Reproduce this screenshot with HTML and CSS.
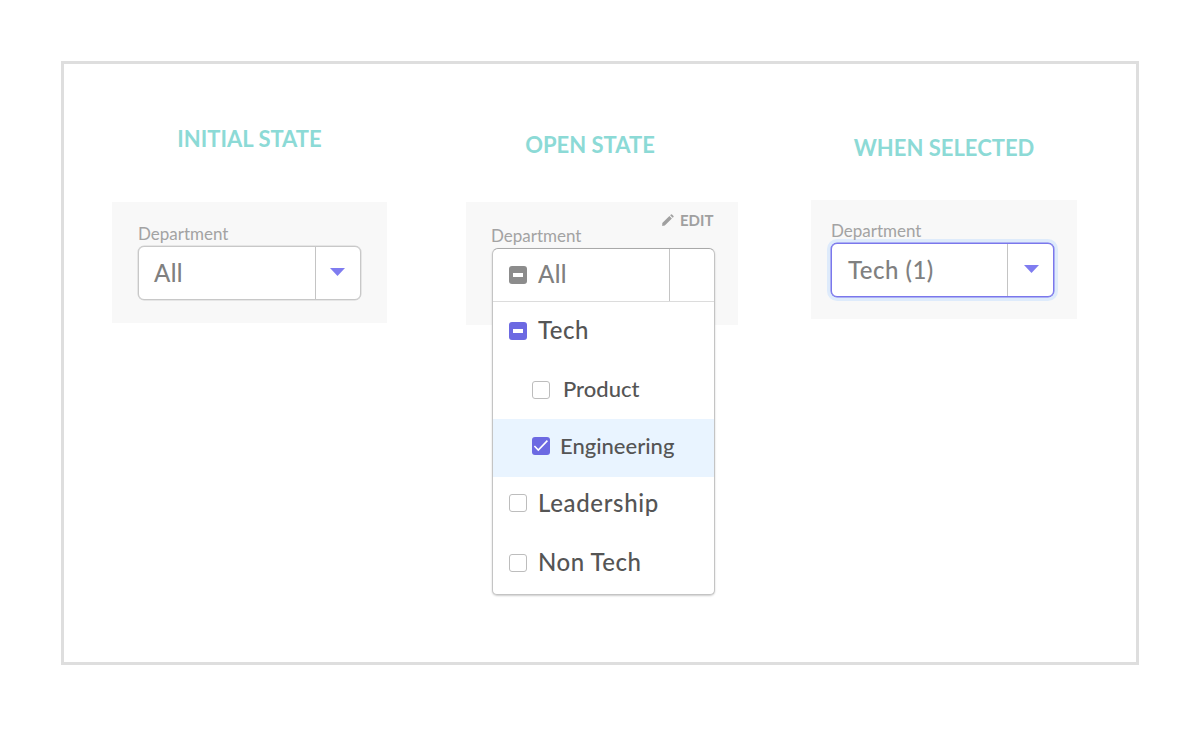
FILE: index.html
```html
<!DOCTYPE html>
<html lang="en">
<head>
<meta charset="utf-8">
<title>Department dropdown states</title>
<link rel="stylesheet" href="styles.css">
</head>
<body>
<main class="frame">
  <section class="state state-initial">
    <h2 class="title">INITIAL STATE</h2>
    <div class="panel">
      <div class="label">Department</div>
      <div class="select">
        <div class="value"><span class="t-all">All</span></div>
        <div class="toggle"><svg class="caret" viewBox="0 0 15 8"><path d="M0 0h15L7.5 8z"/></svg></div>
      </div>
    </div>
  </section>

  <section class="state state-open">
    <h2 class="title">OPEN STATE</h2>
    <div class="panel">
      <div class="edit">
        <svg class="pencil" viewBox="0 0 12 12"><path d="M.3 9.1 7.4 2l2.5 2.5-7.1 7.1-2.6.3zM8.1 1.3l.9-.9q.5-.4 1 0l1.5 1.5q.4.5 0 1l-.9.9z"/></svg>
        <span>EDIT</span>
      </div>
      <div class="label">Department</div>
      <div class="menu">
        <div class="menu-head">
          <div class="value"><i class="box box-gray"></i><span class="t-all">All</span></div>
          <div class="toggle"></div>
        </div>
        <div class="row row-tech"><i class="box box-part"></i><span>Tech</span></div>
        <div class="row row-product"><i class="box"></i><span>Product</span></div>
        <div class="row row-eng"><i class="box box-on"><svg viewBox="0 0 18 18"><path d="M2.4 9 6.3 13 15.4 3.6"/></svg></i><span>Engineering</span></div>
        <div class="row row-lead"><i class="box"></i><span>Leadership</span></div>
        <div class="row row-non"><i class="box"></i><span>Non Tech</span></div>
      </div>
    </div>
  </section>

  <section class="state state-selected">
    <h2 class="title">WHEN SELECTED</h2>
    <div class="panel">
      <div class="label">Department</div>
      <div class="select select-focus">
        <div class="value"><span class="t-count">Tech (1)</span></div>
        <div class="toggle"><svg class="caret" viewBox="0 0 15 8"><path d="M0 0h15L7.5 8z"/></svg></div>
      </div>
    </div>
  </section>
</main>
</body>
</html>
```
FILE: styles.css
```css
* { box-sizing: border-box; }
body {
  margin: 0;
  padding: 61px;
  background: #fff;
  font-family: Lato, "Open Sans", sans-serif;
  white-space: nowrap;
}
.frame {
  display: flex;
  align-items: flex-start;
  width: 1078px;
  height: 604px;
  padding-left: 48px;
  border: 3px solid #dedede;
}
.state-initial { width: 275px; padding-top: 61px; }
.state-open { width: 272px; margin-left: 79px; padding-top: 67px; }
.state-selected { width: 266px; margin-left: 73px; padding-top: 70px; }
.title {
  margin: 0;
  color: #8cdad6;
  font-size: 22px;
  font-weight: 700;
  line-height: 28px;
  text-align: center;
}
.state-open .title { padding-right: 24px; }
.panel { background: #f8f8f8; }
.state-initial .panel { height: 121px; margin-top: 49px; padding: 22px 0 0 26px; }
.state-open .panel { height: 123px; margin-top: 43px; padding: 9px 0 0 26px; }
.state-selected .panel { height: 119px; margin-top: 38px; padding: 21px 0 0 20px; }
.label {
  height: 22px;
  color: #a3a3a3;
  font-size: 17px;
  line-height: 20px;
}
.edit {
  display: flex;
  align-items: center;
  gap: 6px;
  height: 15px;
  padding: 2px 0 0 170px;
  color: #a0a0a0;
  font-size: 15px;
  font-weight: 700;
  line-height: 18px;
}
.edit + .label { margin-left: -1px; }
.pencil { width: 12px; height: 12px; fill: currentColor; }
.select {
  display: flex;
  width: 223px;
  height: 54px;
  background: #fff;
  border: 1px solid #c8c8c8;
  border-radius: 6px;
  box-shadow: 0 0 0 .5px #d4d4d4;
}
.select-focus {
  border: 1px solid #7a77ec;
  box-shadow: 0 0 0 .5px #7a77ec, 0 0 0 4px #deebfb;
}
.value {
  display: flex;
  align-items: center;
  flex: 1;
  padding: 0 0 1px 15px;
  color: #808080;
  font-size: 24px;
  font-weight: 500;
  line-height: 30px;
}
.t-all { letter-spacing: .4px; }
.t-count { letter-spacing: .5px; }
.toggle {
  display: flex;
  align-items: center;
  justify-content: center;
  width: 46px;
  border-left: 1px solid #c4c4c4;
}
.state-initial .toggle, .menu .toggle { width: 45px; }
.state-initial .caret { margin-right: 2px; }
.select-focus .value { padding: 0 0 1px 16px; }
.select-focus .caret { margin-left: 2px; }
.caret { width: 15px; height: 8px; margin-top: -2px; fill: #7f7cf0; }
.menu {
  position: relative;
  width: 223px;
  height: 347px;
  background: #fff;
  border: 1px solid #c4c4c4;
  border-top-color: #a9a9a9;
  border-radius: 6px 6px 5px 5px;
  box-shadow: 0 1px 2px rgba(0, 0, 0, .2);
}
.menu-head { display: flex; height: 53px; border-bottom: 1px solid #dcdcdc; }
.menu-head .value { gap: 11px; padding: 0 0 0 16px; }
.menu-head .value span { padding-bottom: 3px; }
.row {
  display: flex;
  align-items: center;
  gap: 11px;
  padding-left: 16px;
  color: #555;
  font-size: 24px;
  font-weight: 500;
  line-height: 30px;
}
.row span { padding-bottom: 2px; }
.row-tech { height: 58px; letter-spacing: .5px; }
.row-product { height: 59px; gap: 13px; padding-left: 39px; font-size: 22px; }
.row-product span { padding-bottom: 1px; }
.row-eng { height: 58px; gap: 10px; padding: 0 0 4px 39px; background: #e9f4ff; font-size: 22px; }
.row-eng span { padding-bottom: 0; }
.row-lead { height: 53px; padding-bottom: 2px; letter-spacing: .65px; }
.row-lead span { padding-bottom: 0; }
.row-non { height: 66px; letter-spacing: .5px; }
.row-non span { padding-bottom: 2px; }
.box {
  display: flex;
  flex: none;
  align-items: center;
  justify-content: center;
  width: 18px;
  height: 18px;
  border: 1px solid #bdbdbd;
  border-radius: 3px;
}
.box-gray { border: 0; background: #8c8c8c; }
.box-part, .box-on { border: 0; background: #6c69e2; }
.box-gray::before, .box-part::before {
  content: "";
  width: 10px;
  height: 4px;
  background: #fff;
}
.box-on svg { width: 18px; height: 18px; fill: none; stroke: #fff; stroke-width: 1.6; }
```
